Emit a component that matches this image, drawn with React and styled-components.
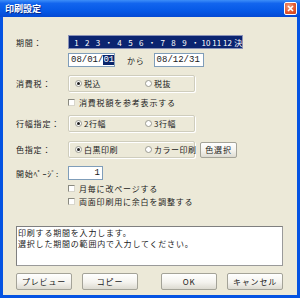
import React from "react";
import styled, { createGlobalStyle } from "styled-components";

const Global = createGlobalStyle`
  html, body { margin: 0; padding: 0; background: #fff; }
  body { font-family: "Noto Sans CJK JP", "Noto Sans", sans-serif; }
`;

const Window = styled.div`
  width: 300px;
  height: 298px;
  display: flex;
  flex-direction: column;
  background: #0553e2;
  box-sizing: border-box;
  font-family: "Noto Sans CJK JP", "Noto Sans", sans-serif;
  font-size: 8px;
  letter-spacing: 0.8px;
  color: #1a1a1a;
`;

const TitleBar = styled.div`
  height: 17px;
  display: flex;
  align-items: center;
  justify-content: space-between;
  padding: 0 3px 0 5px;
  background: linear-gradient(#3d8ef8 0%, #1265ee 20%, #0558e6 65%, #0449d3 100%);
`;

const Title = styled.span`
  color: #fff;
  font-weight: bold;
  font-size: 9px;
  letter-spacing: 0;
  text-shadow: 1px 1px 0 #0a2a8a;
`;

const CloseBtn = styled.div`
  width: 13px;
  height: 13px;
  box-sizing: border-box;
  border: 1px solid #fff;
  border-radius: 2px;
  background: radial-gradient(circle at 35% 30%, #f29a7c, #e1552c 60%, #c8401c);
  display: flex;
  align-items: center;
  justify-content: center;
`;

const Body = styled.div`
  flex: 1;
  margin: 0 3px 3px 3px;
  background: #ece9d8;
  display: flex;
  flex-direction: column;
  padding: 18px 0 0 13px;
`;

const Row = styled.div`
  display: flex;
  align-items: center;
  margin-top: ${(p) => p.$mt || 0}px;
`;

const Label = styled.div`
  width: 52px;
  flex: none;
  white-space: nowrap;
`;

const Indent = styled.div`
  width: 52px;
  flex: none;
`;

const MonthBar = styled.div`
  width: 175px;
  height: 14px;
  box-sizing: border-box;
  background: #0b2470;
  border: 1px solid #8a92b8;
  display: grid;
  grid-template-columns: repeat(16, 10.8px);
  padding-left: 2px;
  align-items: center;
  color: #fff;
  font-size: 8px;
  letter-spacing: 0;
`;

const Cell = styled.span`
  text-align: center;
`;

const TextInput = styled.div`
  width: ${(p) => p.$w}px;
  height: 14px;
  box-sizing: border-box;
  background: #fff;
  border: 1px solid #7f9db9;
  display: flex;
  align-items: center;
  justify-content: ${(p) => (p.$right ? "flex-end" : "flex-start")};
  padding: 0 2px;
  font-family: "Liberation Mono", monospace;
  font-size: 9px;
  letter-spacing: 0;
`;

const Sel = styled.span`
  background: #0a246a;
  color: #fff;
`;

const Kara = styled.span`
  margin: 0 9px 0 12px;
`;

const Group = styled.div`
  width: 127px;
  height: 17px;
  box-sizing: border-box;
  border: 1px solid #cfcdbd;
  box-shadow: inset 1px 1px 0 #fff, 1px 1px 0 #fff;
  border-radius: 2px;
  display: flex;
  align-items: center;
  padding-left: 6px;
  letter-spacing: 0.5px;
`;

const Radio = styled.label`
  display: flex;
  align-items: center;
  gap: 2px;
  width: 70px;
  flex: none;
  &:last-child { width: auto; }
`;

const Dot = styled.span`
  width: 7px;
  height: 7px;
  box-sizing: border-box;
  border-radius: 50%;
  border: 1px solid #9a9a90;
  background: #fff;
  display: flex;
  align-items: center;
  justify-content: center;
  &::after {
    content: "";
    width: 3px;
    height: 3px;
    border-radius: 50%;
    background: ${(p) => (p.$on ? "#202020" : "transparent")};
  }
`;

const Check = styled.label`
  display: flex;
  align-items: center;
  gap: 4px;
`;

const Box = styled.span`
  width: 7px;
  height: 7px;
  box-sizing: border-box;
  border-top: 1px solid #8a8a80;
  border-left: 1px solid #8a8a80;
  border-right: 1px solid #d8d6cc;
  border-bottom: 1px solid #d8d6cc;
  background: #fff;
`;

const Button = styled.div`
  width: ${(p) => p.$w}px;
  height: ${(p) => p.$h || 17}px;
  box-sizing: border-box;
  border: 1px solid #a4a398;
  border-radius: 2px;
  background: linear-gradient(#ffffff, #f4f3ee 55%, #dddbd1);
  display: flex;
  align-items: center;
  justify-content: center;
  margin-left: ${(p) => p.$ml || 0}px;
`;

const Memo = styled.div`
  width: 267px;
  height: 40px;
  box-sizing: border-box;
  background: #fff;
  border-top: 1px solid #7f7f7f;
  border-left: 1px solid #7f7f7f;
  border-right: 1px solid #9a9a9a;
  border-bottom: 1px solid #9a9a9a;
  padding: 0 1px;
  line-height: 11px;
  white-space: pre-line;
`;

const Buttons = styled.div`
  display: flex;
  width: 267px;
  margin-top: 7px;
`;

const months = ["1","2","3","・","4","5","6","・","7","8","9","・","10","11","12","決"];

export default function App() {
  return (
    <Window>
      <Global />
      <TitleBar>
        <Title>印刷設定</Title>
        <CloseBtn>
          <svg width="7" height="7" viewBox="0 0 7 7">
            <path d="M1 1L6 6M6 1L1 6" stroke="#fff" strokeWidth="1.6" />
          </svg>
        </CloseBtn>
      </TitleBar>
      <Body>
        <Row>
          <Label>期間：</Label>
          <MonthBar>
            {months.map((m, i) => (
              <Cell key={i}>{m}</Cell>
            ))}
          </MonthBar>
        </Row>
        <Row $mt={4}>
          <Indent />
          <TextInput $w={47}>08/01/<Sel>01</Sel></TextInput>
          <Kara>から</Kara>
          <TextInput $w={50}>08/12/31</TextInput>
        </Row>
        <Row $mt={8}>
          <Label>消費税：</Label>
          <Group>
            <Radio><Dot $on />税込</Radio>
            <Radio><Dot />税抜</Radio>
          </Group>
        </Row>
        <Row $mt={5}>
          <Indent />
          <Check><Box />消費税額を参考表示する</Check>
        </Row>
        <Row $mt={7}>
          <Label>行幅指定：</Label>
          <Group>
            <Radio><Dot $on />2行幅</Radio>
            <Radio><Dot />3行幅</Radio>
          </Group>
        </Row>
        <Row $mt={9}>
          <Label>色指定：</Label>
          <Group>
            <Radio><Dot $on />白黒印刷</Radio>
            <Radio><Dot />カラー印刷</Radio>
          </Group>
          <Button $w={37} $h={16} $ml={5}>色選択</Button>
        </Row>
        <Row $mt={8}>
          <Label>開始ﾍﾟｰｼﾞ:</Label>
          <TextInput $w={35} $right>1</TextInput>
        </Row>
        <Row $mt={3}>
          <Indent />
          <Check><Box />月毎に改ページする</Check>
        </Row>
        <Row $mt={2}>
          <Indent />
          <Check><Box />両面印刷用に余白を調整する</Check>
        </Row>
        <Row $mt={19}>
          <Memo>{"印刷する期間を入力します。\n選択した期間の範囲内で入力してください。"}</Memo>
        </Row>
        <Buttons>
          <Button $w={56}>プレビュー</Button>
          <Button $w={56} $ml={10}>コピー</Button>
          <Button $w={56} $ml={23}>OK</Button>
          <Button $w={56} $ml={10}>キャンセル</Button>
        </Buttons>
      </Body>
    </Window>
  );
}
